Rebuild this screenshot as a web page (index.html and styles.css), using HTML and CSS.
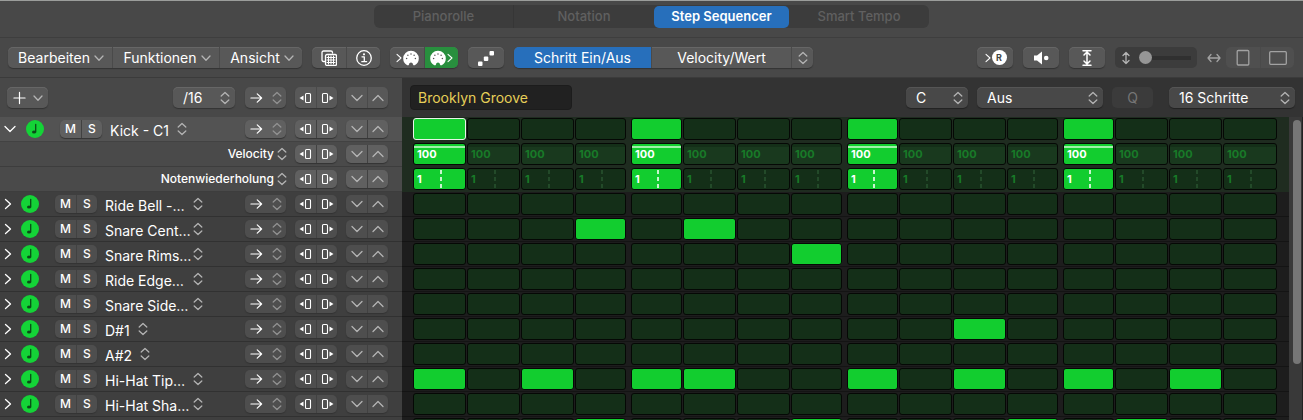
FILE: index.html
```html
<!DOCTYPE html>
<html lang="de">
<head>
<meta charset="utf-8">
<title>Step Sequencer</title>
<link rel="stylesheet" href="styles.css">
</head>
<body>
<svg class="sprite" aria-hidden="true">
  <symbol id="down" viewBox="0 0 10 10"><path d="M1 3l4 4.2L9 3"/></symbol>
  <symbol id="right" viewBox="0 0 10 12"><path d="M2.500 1.500L7.500 6l-5 4.500"/></symbol>
  <symbol id="wide-down" viewBox="0 0 12 10"><path d="M1 2.500l5 5 5-5"/></symbol>
  <symbol id="wide-up" viewBox="0 0 12 10"><path d="M1 7.500l5-5 5 5"/></symbol>
  <symbol id="updown" viewBox="0 0 10 14"><path d="M1.200 5L5 1.500 8.800 5M1.200 9L5 12.500 8.800 9"/></symbol>
  <symbol id="arrow" viewBox="0 0 14 12"><path d="M1 6h11.500M7.800 1.500L12.500 6l-4.700 4.500"/></symbol>
  <symbol id="rot-left" viewBox="0 0 14 12"><rect x="6.500" y="1.500" width="5" height="9" rx="1"/><path class="solid" d="M4.500 3.500v5L.5 6z"/></symbol>
  <symbol id="rot-right" viewBox="0 0 14 12"><rect x="2.500" y="1.500" width="5" height="9" rx="1"/><path class="solid" d="M9.500 3.500v5l4-2.500z"/></symbol>
  <symbol id="note" viewBox="0 0 18 18"><circle cx="9" cy="9" r="9" fill="#14d337" stroke="none"/><ellipse cx="8" cy="12" rx="2" ry="1.600" fill="#0b4a18" stroke="none"/><path d="M9.700 12V4.500" stroke="#0b4a18"/></symbol>
  <symbol id="palette" viewBox="0 0 16 16"><path class="solid" d="M6 14.500c-.2.700-.8 1-1.700.8A7.800 7.800 0 0 1 .2 8.500a7.800 7.800 0 0 1 15.600 0 7.800 7.800 0 0 1-4.100 6.800c-.9.200-1.500-.1-1.700-.8-.3-1.200-.9-1.900-2-1.900s-1.700.7-2 1.900z"/><g class="holes"><circle cx="3.600" cy="8.500" r=".75"/><circle cx="4.900" cy="5.300" r=".75"/><circle cx="8" cy="4" r=".75"/><circle cx="11.100" cy="5.300" r=".75"/><circle cx="12.400" cy="8.500" r=".75"/></g></symbol>
</svg>

<div class="app">
  <header class="tabs-bar">
    <nav class="tabs">
      <button class="tab">Pianorolle</button>
      <button class="tab">Notation</button>
      <button class="tab active">Step Sequencer</button>
      <button class="tab">Smart Tempo</button>
    </nav>
  </header>

  <div class="toolbar">
    <div class="group menus">
      <button class="menu-edit">Bearbeiten <svg class="i10"><use href="#down"/></svg></button>
      <button class="menu-func">Funktionen <svg class="i10"><use href="#down"/></svg></button>
      <button class="menu-view">Ansicht <svg class="i10"><use href="#down"/></svg></button>
    </div>
    <div class="group icons">
      <button aria-label="Pattern-Übersicht"><svg class="i16" viewBox="0 0 16 16"><path d="M3.500 11.500h-1a1.500 1.500 0 0 1-1.500-1.500V2.500A1.500 1.500 0 0 1 2.500 1H10a1.500 1.500 0 0 1 1.500 1.500V3"/><rect x="4.500" y="4.500" width="11" height="11" rx="1.500"/><path stroke-width="1" d="M7.500 6v8M10 6v8M12.500 6v8M6 7.500h8M6 10h8M6 12.500h8"/></svg></button>
      <button aria-label="Informationen"><svg class="i18" viewBox="0 0 18 18"><circle cx="9" cy="9" r="7.300"/><circle class="solid" cx="9" cy="5.300" r="1.100"/><path d="M7 7.800h2.300v4.700M6.800 12.700h4.800"/></svg></button>
    </div>
    <div class="group icons">
      <button aria-label="MIDI In"><svg class="chev"><use href="#right"/></svg><svg class="i16"><use href="#palette"/></svg></button>
      <button class="green" aria-label="MIDI Out"><svg class="i16"><use href="#palette"/></svg><svg class="chev"><use href="#right"/></svg></button>
    </div>
    <div class="group single">
      <button aria-label="Schrittaufnahme"><svg class="i16" viewBox="0 0 16 16"><g class="solid"><rect x="0" y="11.500" width="4.500" height="4.500" rx="1"/><rect x="5.800" y="6.500" width="4.500" height="4.500" rx="1"/><rect x="11.500" y="1" width="4.500" height="4.500" rx="1"/></g></svg></button>
    </div>
    <div class="group modes">
      <button class="blue">Schritt Ein/Aus</button>
      <button class="value">Velocity/Wert</button>
      <button class="pick" aria-label="Modus wählen"><svg class="ud"><use href="#updown"/></svg></button>
    </div>
    <div class="toolbar-right">
      <div class="group single"><button aria-label="Aufnahme"><svg class="chev"><use href="#right"/></svg><span class="rec">R</span></button></div>
      <div class="group single"><button aria-label="Vorhören"><svg class="i16" viewBox="0 0 16 16"><path class="solid" d="M1 5.500h3L9 1.500v13L4 10.500H1z"/><circle class="solid" cx="13.200" cy="8" r="2.300"/></svg></button></div>
      <div class="group single"><button aria-label="Vertikal anpassen"><svg class="i16 strong" viewBox="0 0 16 16"><path d="M4 .8h8M4 15.200h8M8 2.500v11M5 5l3-3 3 3M5 11l3 3 3-3"/></svg></button></div>
      <label class="zoom"><svg class="ud" viewBox="0 0 10 14"><path d="M5 1.500v11M2 4.500l3-3 3 3M2 9.500l3 3 3-3"/></svg><input type="range" min="0" max="100" value="0" aria-label="Vertikaler Zoom"></label>
      <svg class="horiz" viewBox="0 0 14 12"><path d="M1 6h12M4 2.500L1 6l3 3.500M10 2.500L13 6l-3 3.500"/></svg>
      <div class="group sizes">
        <button aria-label="Hochformat"><svg class="i18" viewBox="0 0 18 18"><rect x="3.200" y="1.500" width="11.600" height="14.500" rx="1"/></svg></button>
        <button aria-label="Querformat"><svg class="i18" viewBox="0 0 18 18"><rect x=".7" y="2.700" width="16.600" height="12.600" rx="1"/></svg></button>
      </div>
    </div>
  </div>

  <div class="pattern-bar">
    <div class="pattern-left">
      <div class="group add"><button aria-label="Zeile hinzufügen"><svg class="i14" viewBox="0 0 14 14"><path d="M7 1v12M1 7h12"/></svg><svg class="i10"><use href="#down"/></svg></button></div>
      <label class="select rate"><select aria-label="Schrittrate"><option>/16</option></select><svg class="ud"><use href="#updown"/></svg></label>
      <div class="pattern-tools" id="pattern-tools"></div>
    </div>
    <div class="pattern-right">
      <input class="name" type="text" value="Brooklyn Groove" aria-label="Pattern-Name">
      <div class="pattern-options">
        <label class="select key"><select aria-label="Tonart"><option>C</option></select><svg class="ud"><use href="#updown"/></svg></label>
        <label class="select scale"><select aria-label="Skala"><option>Aus</option></select><svg class="ud"><use href="#updown"/></svg></label>
        <button class="quantize" disabled>Q</button>
        <label class="select steps"><select aria-label="Patternlänge"><option>16 Schritte</option></select><svg class="ud"><use href="#updown"/></svg></label>
      </div>
    </div>
  </div>

  <main class="sequencer">
    <div class="rows" id="rows"></div>
    <div class="scroll"><div class="thumb"></div></div>
  </main>
</div>
<script src="script.js"></script>
</body>
</html>
```
FILE: styles.css
```css
* { box-sizing: border-box; }

body {
  margin: 0;
  background: #1d1d1d;
  color: #fff;
  font: 400 14px/20px Inter, "Liberation Sans", sans-serif;
}

button, input, select { font: inherit; color: inherit; margin: 0; }

button {
  display: flex;
  align-items: center;
  justify-content: center;
  padding: 0;
  border: 0;
  background: none;
}

svg {
  flex: none;
  fill: none;
  stroke: currentColor;
  stroke-width: 1.3;
  stroke-linecap: round;
  stroke-linejoin: round;
}

.sprite { position: absolute; width: 0; height: 0; }
.solid { fill: currentColor; stroke: none; }
.holes { fill: #555; stroke: none; }
.i10 { width: 10px; height: 10px; color: #b4b4b4; }
.i14 { width: 14px; height: 14px; }
.i16 { width: 16px; height: 16px; }
.i18 { width: 18px; height: 18px; }
.chev { width: 8px; height: 10px; }
.ud { width: 10px; height: 14px; color: #b4b4b4; }
.strong { stroke-width: 1.5; }

.app {
  display: flex;
  flex-direction: column;
  height: 100vh;
  overflow: hidden;
  border-top: 1px solid #9b9d9b;
}

.tabs-bar {
  display: flex;
  justify-content: center;
  padding: 4px 0 9px;
  background: #484848;
  border-bottom: 1px solid #3e3e3e;
}

.tabs { display: flex; border-radius: 6px; background: #3c3c3c; }

.tab {
  width: 140px;
  height: 23px;
  padding-bottom: 2px;
  color: #606060;
  font-size: 13px;
  font-weight: 500;
}
.tab.active {
  width: 135px;
  height: 22px;
  margin-top: 1px;
  border-radius: 5px;
  background: #276fbb;
  color: #fff;
  font-weight: 600;
}
.tab:first-child { border-right: 1px solid #363636; }

.toolbar {
  display: flex;
  align-items: center;
  gap: 10px;
  height: 40px;
  padding: 0 9px 0 8px;
  background: #484848;
  border-bottom: 1px solid #3b3b3b;
}

.group {
  display: flex;
  flex: none;
  overflow: hidden;
  border-radius: 5px;
  background: #585858;
  box-shadow: 0 1px 1px #333, inset 0 1px 0 #666;
}
.group button { height: 21px; }
.group button + button { border-left: 1px solid #4a4a4a; }
.menus button { gap: 4px; padding-left: 2px; }
.menu-edit { width: 104px; }
.menu-func { width: 107px; }
.menu-view { width: 83px; }
.icons button, .sizes button { width: 34px; }
.single button { width: 36px; }
.group .green { background: #288f3e; }
.green .holes { fill: #288f3e; }
.blue { width: 137px; background: #276fbb; }
.value { width: 140px; }
.pick { width: 22px; }

.toolbar-right {
  display: flex;
  align-items: center;
  gap: 10px;
  margin-left: auto;
}

.rec {
  width: 15px;
  height: 15px;
  border-radius: 50%;
  background: #fff;
  color: #444;
  font: 700 9px/15px Inter, sans-serif;
}

.zoom {
  display: flex;
  align-items: center;
  gap: 8px;
  width: 82px;
  height: 21px;
  padding: 0 6px;
  border-radius: 5px;
  background: #3c3c3c;
}
.zoom input {
  width: 52px;
  height: 14px;
  appearance: none;
  background: linear-gradient(#303030, #303030) center / 100% 4px no-repeat;
}
.zoom input::-webkit-slider-thumb {
  appearance: none;
  width: 13px;
  height: 13px;
  border-radius: 50%;
  background: #969696;
}
.horiz { width: 14px; height: 12px; color: #a2a2a2; }
.sizes { margin-left: -5px; background: #4f4f4f; box-shadow: none; color: #a2a2a2; }

.pattern-bar { display: flex; height: 39px; }

.pattern-left {
  display: flex;
  align-items: center;
  width: 402px;
  padding: 0 14px 0 7px;
  background: #484848;
}
.add button { width: 41px; gap: 7px; }
.add .i14 { width: 13px; }

.select {
  position: relative;
  display: block;
  height: 21px;
  border-radius: 5px;
  background: #585858;
  box-shadow: 0 1px 1px #333, inset 0 1px 0 #666;
}
.select select {
  width: 100%;
  height: 21px;
  padding: 0 10px;
  border: 0;
  appearance: none;
  background: none;
  line-height: 21px;
}
.select .ud { position: absolute; top: 4px; right: 5px; pointer-events: none; }
.rate { width: 62px; margin: 0 10px 0 auto; }

.pattern-tools, .tools { display: flex; gap: 9px; }

.pattern-right {
  display: flex;
  flex: 1;
  align-items: center;
  justify-content: space-between;
  padding: 0 8px;
  background: #333;
}
.name {
  width: 162px;
  height: 25px;
  padding: 0 7px;
  border: 1px solid #1c1c1c;
  border-radius: 4px;
  background: #212121;
  color: #e6cf58;
}
.pattern-options { display: flex; align-items: center; gap: 9px; }
.pattern-options .select { background: #484848; box-shadow: 0 1px 1px #222, inset 0 1px 0 #555; }
.key { width: 62px; }
.scale { width: 126px; }
.steps { width: 126px; margin-left: 7px; }
.quantize { width: 41px; height: 21px; border-radius: 5px; background: #3b3b3b; color: #757575; }

.sequencer { display: flex; flex: 1; min-height: 0; overflow: hidden; }
.rows { flex: 1; }

.row {
  display: grid;
  grid-template-columns: 402px 1fr;
  height: 25px;
}

.track {
  display: flex;
  align-items: center;
  padding: 0 14px 0 3px;
  border-bottom: 1px solid #313131;
  background: #3f3f3f;
}
.kick .track { padding-left: 5px; background: #535353; border-color: #424242; }
.sub .track { padding-left: 0; background: #4a4a4a; border-color: #3d3d3d; }

.fold { width: 10px; height: 12px; }
.fold svg { width: 10px; height: 12px; }
.kick .fold svg { width: 12px; height: 10px; }
.power { margin-left: 8px; }
.power svg { width: 18px; height: 18px; }
.kick .power { margin-left: 11px; }
.track .ms { margin: 0 8px 0 16px; }
.ms button { width: 21px; height: 18px; font-size: 12px; font-weight: 500; }
.track .group, .pattern-tools .group { box-shadow: 0 1px 1px #333; }
.track .group { background: #4e4e4e; }
.kick .group, .sub .group { background: #606060; }
.track .group button { height: 18px; }
.track .group button + button { border-color: #414141; }
.track-name { padding-top: 3px; white-space: nowrap; }
.track-name.long { width: 80px; }
.track-name + .ud { margin-left: 8px; }
.tools { margin-left: auto; }

.param { margin-left: auto; font-size: 12px; font-weight: 500; }
.param + .ud { margin: 0 8px 0 3px; }
.sub .tools { margin-left: 0; }

.dir button { width: 41px; gap: 9px; }
.dir .arrow { width: 13px; height: 12px; }
.dir .ud { width: 10px; color: #929292; }
.pair button { width: 21px; }
.pair svg { width: 14px; height: 12px; stroke-width: 1.1; }
.nudge svg { width: 12px; height: 10px; stroke-width: 1.3; color: #b4b4b4; }

.steps-row {
  display: grid;
  grid-template-columns: repeat(16, 1fr);
  padding: 1px 12px 1px 11px;
  border-bottom: 1px solid #141414;
  background: #1d1d1d;
}
.kick .steps-row, .sub .steps-row { background: #1f2c20; border-color: #1f2c20; }

.step {
  position: relative;
  justify-content: flex-start;
  margin-right: 1px;
  padding-left: 3px;
  border: 1px solid #050805;
  border-radius: 3px;
  background: #142f18;
  color: #187a28;
  font: 700 11px/16px Inter, sans-serif;
}
.step:nth-child(4n) { margin-right: 3px; }
.step:nth-child(4n + 5) { margin-left: 2px; }
.step:last-child { margin-right: 0; }
.step.vel { background: linear-gradient(#142f18 3px, #19391e 3px); }
.step.on { background: #12cd2f; color: #fff; }
.step.selected { border-color: #e8f5e8; }
.step.vel.on { background: linear-gradient(#12cd2f 2px, #a0f0aa 2px, #a0f0aa 4px, #12cd2f 4px); }
.step.rep::after {
  content: "";
  position: absolute;
  top: 1px;
  bottom: 1px;
  left: 50%;
  width: 2px;
  background: repeating-linear-gradient(#234a29 0 4px, transparent 4px 7px);
}
.step.rep.on::after { background: repeating-linear-gradient(#c8f5ce 0 4px, transparent 4px 7px); }

.scroll {
  width: 14px;
  padding: 3px 1px 56px 4px;
  border-right: 1px solid #222;
  background: #393939;
}
.thumb { height: 100%; border-radius: 5px; background: #767676; }
```
FILE: script.js
```js
const icon = (id, cls = "") => `<svg class="${cls}" aria-hidden="true"><use href="#${id}"/></svg>`;

const direction = `<div class="group dir"><button aria-label="Abspielrichtung">${icon("arrow", "arrow")}${icon("updown", "ud")}</button></div>`;
const rotate = `<div class="group pair"><button aria-label="Nach links rotieren">${icon("rot-left")}</button><button aria-label="Nach rechts rotieren">${icon("rot-right")}</button></div>`;
const nudge = `<div class="group pair nudge"><button aria-label="Verringern">${icon("wide-down")}</button><button aria-label="Erhöhen">${icon("wide-up")}</button></div>`;

const tracks = [
  { name: "Kick - C1", on: [0, 4, 8, 12], open: true },
  { name: "Ride Bell -…", on: [] },
  { name: "Snare Cent…", on: [3, 5] },
  { name: "Snare Rims…", on: [7] },
  { name: "Ride Edge…", on: [] },
  { name: "Snare Side…", on: [] },
  { name: "D#1", on: [10] },
  { name: "A#2", on: [] },
  { name: "Hi-Hat Tip…", on: [0, 2, 4, 5, 8, 10, 12, 14] },
  { name: "Hi-Hat Sha…", on: [] },
  { name: "", on: [3, 7, 11, 13] }
];

function steps(on, type, text, label) {
  let html = "";
  for (let i = 0; i < 16; i++) {
    const active = on.includes(i);
    const selected = type === "trigger" && text === "first" && i === 0;
    html += `<button class="step ${type}${active ? " on" : ""}${selected ? " selected" : ""}" aria-pressed="${active}" aria-label="${label} Schritt ${i + 1}">${type === "trigger" ? "" : text}</button>`;
  }
  return `<div class="steps-row">${html}</div>`;
}

function trackHeader(t) {
  return `<button class="fold" aria-label="Unterzeilen">${icon(t.open ? "wide-down" : "right")}</button>
    <button class="power" aria-label="Zeile ein/aus">${icon("note")}</button>
    <div class="group ms"><button>M</button><button>S</button></div>
    <span class="track-name${t.name.endsWith("…") ? " long" : ""}">${t.name}</span>${icon("updown", "ud")}
    <div class="tools">${direction}${rotate}${nudge}</div>`;
}

function trackRow(t) {
  return `<div class="row${t.open ? " kick" : ""}">
    <div class="track">${t.name ? trackHeader(t) : ""}</div>
    ${steps(t.on, "trigger", t.open ? "first" : "", t.name)}
  </div>`;
}

function paramRow(name, on, type, text) {
  return `<div class="row sub">
    <div class="track"><span class="param">${name}</span>${icon("updown", "ud")}<div class="tools">${rotate}${nudge}</div></div>
    ${steps(on, type, text, name)}
  </div>`;
}

document.getElementById("pattern-tools").innerHTML = direction + rotate + nudge;
document.getElementById("rows").innerHTML = tracks.map(t =>
  trackRow(t) + (t.open
    ? paramRow("Velocity", t.on, "vel", "100") + paramRow("Notenwiederholung", t.on, "rep", "1")
    : "")
).join("");
```
